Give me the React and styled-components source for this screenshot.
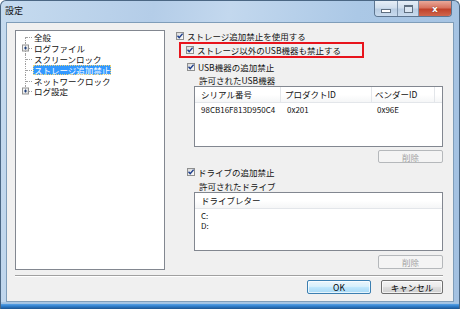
import styled, { createGlobalStyle } from 'styled-components';

const GlobalStyle = createGlobalStyle`
  html, body { margin: 0; padding: 0; }
  body {
    width: 460px;
    height: 309px;
    overflow: hidden;
    font-family: "Noto Sans CJK JP", "Liberation Sans", sans-serif;
    font-size: 8.5px;
    color: #111;
  }
`;

const Window = styled.div`
  width: 460px;
  height: 309px;
  box-sizing: border-box;
  display: flex;
  flex-direction: column;
  border: 1px solid #4b6784;
  border-bottom: none;
  border-radius: 6px 6px 0 0;
  background: linear-gradient(100deg, #c6dbef 0%, #b4cde8 30%, #c3d8ee 45%, #abc8e6 70%, #a3c1e1 100%);
`;

const TitleBar = styled.div`
  height: 20px;
  display: flex;
  justify-content: space-between;
  align-items: flex-start;
  padding: 0 7px 0 4px;
`;

const Title = styled.div`
  font-size: 9px;
  line-height: 19px;
`;

const Controls = styled.div`
  display: flex;
  height: 15px;
  border: 1px solid #5d7590;
  border-top: none;
  border-radius: 0 0 4px 4px;
  overflow: hidden;
`;

const Ctl = styled.div`
  width: ${p => p.$w}px;
  display: flex;
  align-items: center;
  justify-content: center;
  background: ${p => p.$close
    ? 'linear-gradient(180deg, #e9a899 0%, #d7735f 45%, #c0422b 55%, #d0664d 100%)'
    : 'linear-gradient(180deg, #e6eef7 0%, #d0deed 45%, #b9cde3 55%, #c9dbee 100%)'};
  border-left: ${p => p.$first ? 'none' : '1px solid #7d93ab'};
  color: #fff;
  font-size: 9px;
  font-weight: bold;
  font-family: "DejaVu Sans", sans-serif;
  text-shadow: 0 0 1px #5a1a10;
`;

const MinGlyph = styled.span`
  width: 8px;
  height: 2px;
  margin-top: 4px;
  background: #fff;
  border: 1px solid #5f6f80;
`;

const MaxGlyph = styled.span`
  width: 7px;
  height: 5px;
  border: 1px solid #5f6f80;
  border-top-width: 2px;
  background: #dbe6f2;
`;

const Client = styled.div`
  margin: 1px 5px 0 5px;
  height: 280px;
  box-sizing: border-box;
  background: #f0f0f0;
  border: 1px solid #7f9db9;
  display: flex;
  flex-direction: column;
  padding: 7px 10px 0 8px;
`;

const BottomEdge = styled.div`
  flex: 1;
  background: linear-gradient(180deg, #a8c6e4 0%, #a8c6e4 20%, #4f9ae0 35%, #2f7fcd 60%, #1d548f 100%);
`;

const Main = styled.div`
  display: flex;
  gap: 11px;
  height: 240px;
`;

const Tree = styled.div`
  width: 150px;
  box-sizing: border-box;
  background: #fff;
  border: 1px solid #828790;
  padding-top: 1px;
`;

const TreeItem = styled.div`
  display: flex;
  align-items: center;
  height: 10.8px;
  padding-left: 6px;
`;

const Connector = styled.span`
  position: relative;
  width: 10px;
  height: 100%;
  flex: none;
  &::before {
    content: "";
    position: absolute;
    left: 3px;
    top: ${p => (p.$first ? '50%' : '0')};
    bottom: ${p => (p.$last ? '50%' : '0')};
    border-left: 1px dotted #a0a0a0;
  }
  &::after {
    content: "";
    position: absolute;
    left: 4px;
    right: 0;
    top: 50%;
    border-top: 1px dotted #a0a0a0;
  }
`;

const Plus = styled.span`
  position: absolute;
  left: 0;
  top: 50%;
  transform: translateY(-50%);
  width: 7px;
  height: 7px;
  box-sizing: border-box;
  border: 1px solid #919191;
  background: linear-gradient(135deg, #fff, #d6d6d6);
  z-index: 1;
  display: flex;
  align-items: center;
  justify-content: center;
  &::before {
    content: "";
    position: absolute;
    width: 3px;
    height: 1px;
    background: #1f3f7a;
  }
  &::after {
    content: "";
    position: absolute;
    width: 1px;
    height: 3px;
    background: #1f3f7a;
  }
`;

const ItemLabel = styled.span`
  margin-left: 1px;
  padding: 0 1px;
  line-height: 10px;
  background: ${p => (p.$selected ? '#3399ff' : 'transparent')};
  color: ${p => (p.$selected ? '#fff' : 'inherit')};
  outline: ${p => (p.$selected ? '1px dotted #e8d27a' : 'none')};
  outline-offset: -1px;
  white-space: nowrap;
`;

const Panel = styled.div`
  width: 267px;
  display: flex;
  flex-direction: column;
`;

const CheckRow = styled.div`
  display: flex;
  align-items: center;
  gap: 3px;
  height: 12px;
  padding-left: ${p => p.$indent || 0}px;
  margin-top: ${p => p.$top || 0}px;
  white-space: nowrap;
`;

const RedFrame = styled.div`
  width: 185px;
  height: 16px;
  box-sizing: border-box;
  margin-left: 3px;
  border: 2px solid #e8141c;
  display: flex;
  align-items: center;
  padding-left: 5px;
  gap: 3px;
  white-space: nowrap;
`;

const Box = styled.span`
  width: 8px;
  height: 8px;
  box-sizing: border-box;
  border: 1px solid #8e8f8f;
  background: linear-gradient(135deg, #d9d9d9, #fbfbfb);
  display: flex;
  align-items: center;
  justify-content: center;
  flex: none;
  svg { display: block; }
`;

const Label = styled.div`
  height: 12px;
  line-height: 12px;
  padding-left: 23px;
  margin-top: ${p => p.$top || 0}px;
`;

const List = styled.div`
  margin-left: 18px;
  width: 249px;
  height: ${p => p.$h}px;
  box-sizing: border-box;
  background: #fff;
  border: 1px solid #828790;
  flex: none;
`;

const Header = styled.div`
  display: grid;
  grid-template-columns: ${p => p.$cols};
  height: 15px;
  border-bottom: 1px solid #e3e6ea;
  background: linear-gradient(180deg, #fff 0%, #fff 50%, #f5f6f7 100%);
`;

const HeadCell = styled.div`
  line-height: 15px;
  padding-left: ${p => p.$pad || 5}px;
  border-right: ${p => (p.$sep ? '1px solid #e3e6ea' : 'none')};
  white-space: nowrap;
`;

const Rows = styled.div`
  padding-top: 2px;
`;

const Row = styled.div`
  display: grid;
  grid-template-columns: ${p => p.$cols};
  height: 10px;
  line-height: 10px;
`;

const Cell = styled.div`
  padding-left: ${p => p.$pad || 5}px;
  white-space: nowrap;
  font-size: 8px;
`;

const BtnRow = styled.div`
  display: flex;
  justify-content: flex-end;
  gap: 10px;
  margin-top: ${p => p.$top || 0}px;
`;

const Button = styled.div`
  width: ${p => p.$w}px;
  height: ${p => p.$h || 14}px;
  box-sizing: border-box;
  border-radius: 2px;
  display: flex;
  align-items: center;
  justify-content: center;
  border: 1px solid ${p => (p.$disabled ? '#b5b8bb' : p.$default ? '#3c7fb1' : '#707070')};
  color: ${p => (p.$disabled ? '#a3a3a3' : '#000')};
  background: ${p => (p.$disabled
    ? '#f4f4f4'
    : p.$default
      ? 'linear-gradient(180deg, #eaf6fd 0%, #d9f0fc 45%, #bee6fd 55%, #a7d9f5 100%)'
      : 'linear-gradient(180deg, #f2f2f2 0%, #ebebeb 45%, #dddddd 55%, #cfcfcf 100%)')};
  box-shadow: ${p => (p.$disabled ? 'none' : 'inset 0 0 0 1px rgba(255,255,255,0.7)')};
`;

const Separator = styled.div`
  margin-top: 5px;
  height: 1px;
  border-top: 1px solid #a0a0a0;
  background: #fff;
`;

const Check = () => (
  <Box>
    <svg width="6" height="6" viewBox="0 0 6 6">
      <path d="M0.5 2.8 L2.2 4.6 L5.6 0.6" fill="none" stroke="#1e3f8c" strokeWidth="1.4" />
    </svg>
  </Box>
);

const treeItems = [
  { text: '全般' },
  { text: 'ログファイル', plus: true },
  { text: 'スクリーンロック' },
  { text: 'ストレージ追加禁止', selected: true },
  { text: 'ネットワークロック' },
  { text: 'ログ設定', plus: true },
];

const usbCols = '86px 91px 63px 1fr';

export default function App() {
  return (
    <>
      <GlobalStyle />
      <Window>
        <TitleBar>
          <Title>設定</Title>
          <Controls>
            <Ctl $w={22} $first><MinGlyph /></Ctl>
            <Ctl $w={20}><MaxGlyph /></Ctl>
            <Ctl $w={32} $close>x</Ctl>
          </Controls>
        </TitleBar>
        <Client>
          <Main>
            <Tree>
              {treeItems.map((it, i) => (
                <TreeItem key={it.text}>
                  <Connector $first={i === 0} $last={i === treeItems.length - 1}>
                    {it.plus && <Plus />}
                  </Connector>
                  <ItemLabel $selected={it.selected}>{it.text}</ItemLabel>
                </TreeItem>
              ))}
            </Tree>
            <Panel>
              <CheckRow><Check />ストレージ追加禁止を使用する</CheckRow>
              <RedFrame><Check />ストレージ以外のUSB機器も禁止する</RedFrame>
              <CheckRow $indent={11} $top={3}><Check />USB機器の追加禁止</CheckRow>
              <Label $top={1}>許可されたUSB機器</Label>
              <List $h={61}>
                <Header $cols={usbCols}>
                  <HeadCell $sep $pad={6}>シリアル番号</HeadCell>
                  <HeadCell $sep $pad={4}>プロダクトID</HeadCell>
                  <HeadCell $sep $pad={3}>ベンダーID</HeadCell>
                  <HeadCell />
                </Header>
                <Rows>
                  <Row $cols={usbCols}>
                    <Cell $pad={6}>98CB16F813D950C4</Cell>
                    <Cell $pad={6}>0x201</Cell>
                    <Cell $pad={5}>0x96E</Cell>
                  </Row>
                </Rows>
              </List>
              <BtnRow $top={3}>
                <Button $w={65} $h={13} $disabled>削除</Button>
              </BtnRow>
              <CheckRow $indent={11} $top={3}><Check />ドライブの追加禁止</CheckRow>
              <Label $top={2}>許可されたドライブ</Label>
              <List $h={59}>
                <Header $cols="1fr">
                  <HeadCell $pad={6}>ドライブレター</HeadCell>
                </Header>
                <Rows>
                  <Row $cols="1fr"><Cell $pad={6}>C:</Cell></Row>
                  <Row $cols="1fr"><Cell $pad={6}>D:</Cell></Row>
                </Rows>
              </List>
              <BtnRow $top={4}>
                <Button $w={65} $disabled>削除</Button>
              </BtnRow>
            </Panel>
          </Main>
          <Separator />
          <BtnRow $top={3}>
            <Button $w={64} $default>OK</Button>
            <Button $w={62}>キャンセル</Button>
          </BtnRow>
        </Client>
        <BottomEdge />
      </Window>
    </>
  );
}
